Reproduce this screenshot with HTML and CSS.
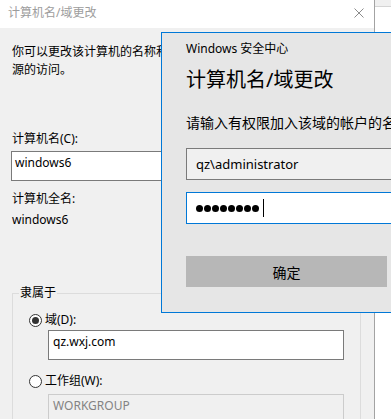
FILE: index.html
```html
<!DOCTYPE html>
<html lang="zh-CN">
<head>
  <meta charset="UTF-8" />
  <title>计算机名/域更改</title>
  <link rel="stylesheet" href="styles.css">
</head>
<body>
  <div class="desktop">
    <div class="window">
      <div class="titlebar">
        <span class="title">计算机名/域更改</span>
        <svg class="close" viewBox="0 0 10 10"><path d="M0.5 0.5L9.5 9.5M9.5 0.5L0.5 9.5" stroke="#8c8c8c" stroke-width="1" fill="none"/></svg>
      </div>
      <div class="content">
        <p class="intro">你可以更改该计算机的名称和成员身份。更改可能会影响对网络资<br>源的访问。</p>

        <div class="label name-label">计算机名(C):</div>
        <div class="field name-field">windows6</div>

        <div class="label full-label">计算机全名:</div>
        <div class="label full-value">windows6</div>

        <fieldset class="member">
          <legend>隶属于</legend>
          <div class="radio-row">
            <span class="radio checked"><span class="dot"></span></span>
            <span>域(D):</span>
          </div>
          <div class="field group-field">qz.wxj.com</div>
          <div class="radio-row second">
            <span class="radio"></span>
            <span>工作组(W):</span>
          </div>
          <div class="field group-field disabled">WORKGROUP</div>
        </fieldset>
      </div>
    </div>
    <div class="side">
      <div class="side-strip"></div>
    </div>
  </div>

  <!-- credential prompt on top of the dialog -->
  <div class="cred">
    <div class="cred-app">Windows 安全中心</div>
    <div class="cred-title">计算机名/域更改</div>
    <div class="cred-msg">请输入有权限加入该域的帐户的名称和密码。</div>
    <div class="cred-field">qz\administrator</div>
    <div class="cred-field pass">
      <span class="pw-dot"></span><span class="pw-dot"></span><span class="pw-dot"></span><span class="pw-dot"></span>
      <span class="pw-dot"></span><span class="pw-dot"></span><span class="pw-dot"></span><span class="pw-dot"></span>
      <span class="caret"></span>
    </div>
    <div class="cred-btn">确定</div>
  </div>
</body>
</html>
```

FILE: styles.css
```css
body {
  margin: 0;
  width: 391px;
  height: 419px;
  overflow: hidden;
  position: relative;
  background: #fff;
  font-family: "Noto Sans", "Noto Sans CJK SC", sans-serif;
  font-size: 12px;
  color: #000;
}
.desktop {
  display: flex;
  height: 419px;
}
.window {
  width: 374px;
  flex: none;
  border-right: 1px solid #a3a3a3;
  background: #f0f0f0;
  overflow: hidden;
}
.side {
  flex: 1;
  background: #fff;
}
.side-strip {
  height: 6px;
  background: #f0f0f0;
  border-bottom: 1px solid #d4d4d4;
}
.titlebar {
  height: 28px;
  box-sizing: border-box;
  background: #fff;
  display: flex;
  align-items: center;
  justify-content: space-between;
  padding: 0 10px 3px 8px;
}
.title {
  color: #9d9d9d;
  line-height: 16px;
}
.close {
  width: 10px;
  height: 10px;
}
.content {
  padding: 15px 0 0 12px;
}
.intro {
  margin: 0;
  line-height: 18px;
  white-space: nowrap;
}
.label {
  line-height: 18px;
}
.name-label {
  margin-top: 51px;
}
.field {
  box-sizing: border-box;
  height: 30px;
  border: 1px solid #7a7a7a;
  background: #fff;
  padding: 2px 4px;
  line-height: 18px;
  white-space: nowrap;
}
.name-field {
  margin-top: 3px;
  margin-left: -1px;
  width: 250px;
  padding-left: 3px;
}
.full-label {
  margin-top: 9px;
}
.full-value {
  margin-top: 3px;
}
.member {
  margin: 56px 0 0 0;
  width: 349px;
  box-sizing: border-box;
  border: 1px solid #dcdcdc;
  padding: 0 0 20px 6px;
  min-width: 0;
}
.member legend {
  padding: 0 1px;
  line-height: 16px;
}
.radio-row {
  display: flex;
  align-items: center;
  line-height: 18px;
  margin-top: 10px;
  margin-left: 10px;
}
.radio-row.second {
  margin-top: 12px;
}
.radio {
  width: 13px;
  height: 13px;
  box-sizing: border-box;
  border: 1px solid #333;
  border-radius: 50%;
  background: #fff;
  margin-right: 3px;
  display: flex;
  align-items: center;
  justify-content: center;
}
.radio .dot {
  width: 7px;
  height: 7px;
  border-radius: 50%;
  background: #333;
}
.group-field {
  margin-top: 1px;
  margin-left: 29px;
  width: 296px;
}
.group-field.disabled {
  margin-top: 4px;
  border-color: #cccccc;
  background: #f0f0f0;
  color: #838383;
}
.cred {
  position: absolute;
  left: 161px;
  top: 32px;
  width: 250px;
  height: 281px;
  box-sizing: border-box;
  border: 1px solid #0078d7;
  background: #e6e6e6;
  padding: 8px 0 0 24px;
  white-space: nowrap;
}
.cred-app {
  font-size: 12px;
  line-height: 16px;
}
.cred-title {
  font-size: 20px;
  line-height: 26px;
  margin-top: 10px;
}
.cred-msg {
  font-size: 14px;
  line-height: 20px;
  margin-top: 20px;
}
.cred-field {
  box-sizing: border-box;
  height: 32px;
  width: 260px;
  margin-top: 15px;
  border: 1px solid #7a7a7a;
  background: #f0f0f0;
  padding: 5px 9px;
  font-size: 13px;
  line-height: 20px;
}
.cred-field.pass {
  margin-top: 12px;
  border-color: #0078d7;
  background: #fff;
  display: flex;
  align-items: center;
  gap: 1px;
}
.pw-dot {
  width: 7px;
  height: 7px;
  border-radius: 50%;
  background: #000;
}
.caret {
  width: 1px;
  height: 18px;
  background: #000;
  margin-left: 3px;
}
.cred-btn {
  margin-top: 32px;
  width: 201px;
  height: 31px;
  background: #b7b7b7;
  display: flex;
  align-items: center;
  justify-content: center;
  font-size: 14px;
}
```
